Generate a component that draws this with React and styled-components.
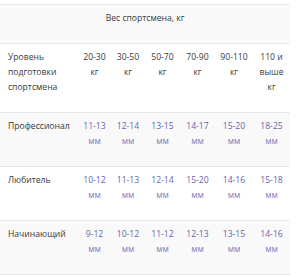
import React from "react";
import styled, { createGlobalStyle } from "styled-components";

const Global = createGlobalStyle`
  html, body { margin: 0; padding: 0; background: #fff; }
  body { font-family: "Open Sans", "Liberation Sans", sans-serif; }
`;

const Wrap = styled.div`
  padding-top: 4px;
  width: 290px;
`;

const Table = styled.table`
  width: 290px;
  table-layout: fixed;
  border-collapse: collapse;
  font-size: 8.6px;
  line-height: 15px;
  color: #3a3a3a;
`;

const Col = styled.col`
  width: ${(p) => p.$w}px;
`;

const Row = styled.tr`
  background: ${(p) => (p.$shaded ? "#f9f9f9" : "#fff")};
  border-top: 1px solid #e6e6e6;
  border-bottom: 1px solid #e6e6e6;
`;

const Cell = styled.td`
  padding: 6px 2px 17px;
  vertical-align: top;
  text-align: ${(p) => (p.$left ? "left" : "center")};
  ${(p) => (p.$left ? "padding-left: 8px;" : "")}
`;

const Value = styled(Cell)`
  color: #6764ad;
  white-space: nowrap;
`;

const Unit = styled.span`
  color: #7f7cbc;
`;

const NoWrap = styled.span`
  white-space: nowrap;
`;

const widths = [78, 33, 34, 35, 35, 38, 37];

const weights = ["20-30", "30-50", "50-70", "70-90", "90-110", "110 и выше"];

const data = [
  ["Профессионал", ["11-13", "12-14", "13-15", "14-17", "15-20", "18-25"], true],
  ["Любитель", ["10-12", "11-13", "12-14", "15-20", "14-16", "15-18"], false],
  ["Начинающий", ["9-12", "10-12", "11-12", "12-13", "13-15", "14-16"], true],
];

export default function App() {
  return (
    <Wrap>
      <Global />
      <Table>
        <colgroup>
          {widths.map((w, i) => (
            <Col key={i} $w={w} />
          ))}
        </colgroup>
        <tbody>
          <Row $shaded>
            <Cell colSpan={7}>Вес спортсмена, кг</Cell>
          </Row>
          <Row>
            <Cell $left>Уровень подготовки спортсмена</Cell>
            {weights.map((w) => (
              <Cell key={w}>
                {w.includes(" ") ? w : <NoWrap>{w}</NoWrap>} кг
              </Cell>
            ))}
          </Row>
          {data.map(([label, vals, shaded]) => (
            <Row key={label} $shaded={shaded}>
              <Cell $left>{label}</Cell>
              {vals.map((v, i) => (
                <Value key={i}>
                  {v}
                  <br />
                  <Unit>мм</Unit>
                </Value>
              ))}
            </Row>
          ))}
        </tbody>
      </Table>
    </Wrap>
  );
}
